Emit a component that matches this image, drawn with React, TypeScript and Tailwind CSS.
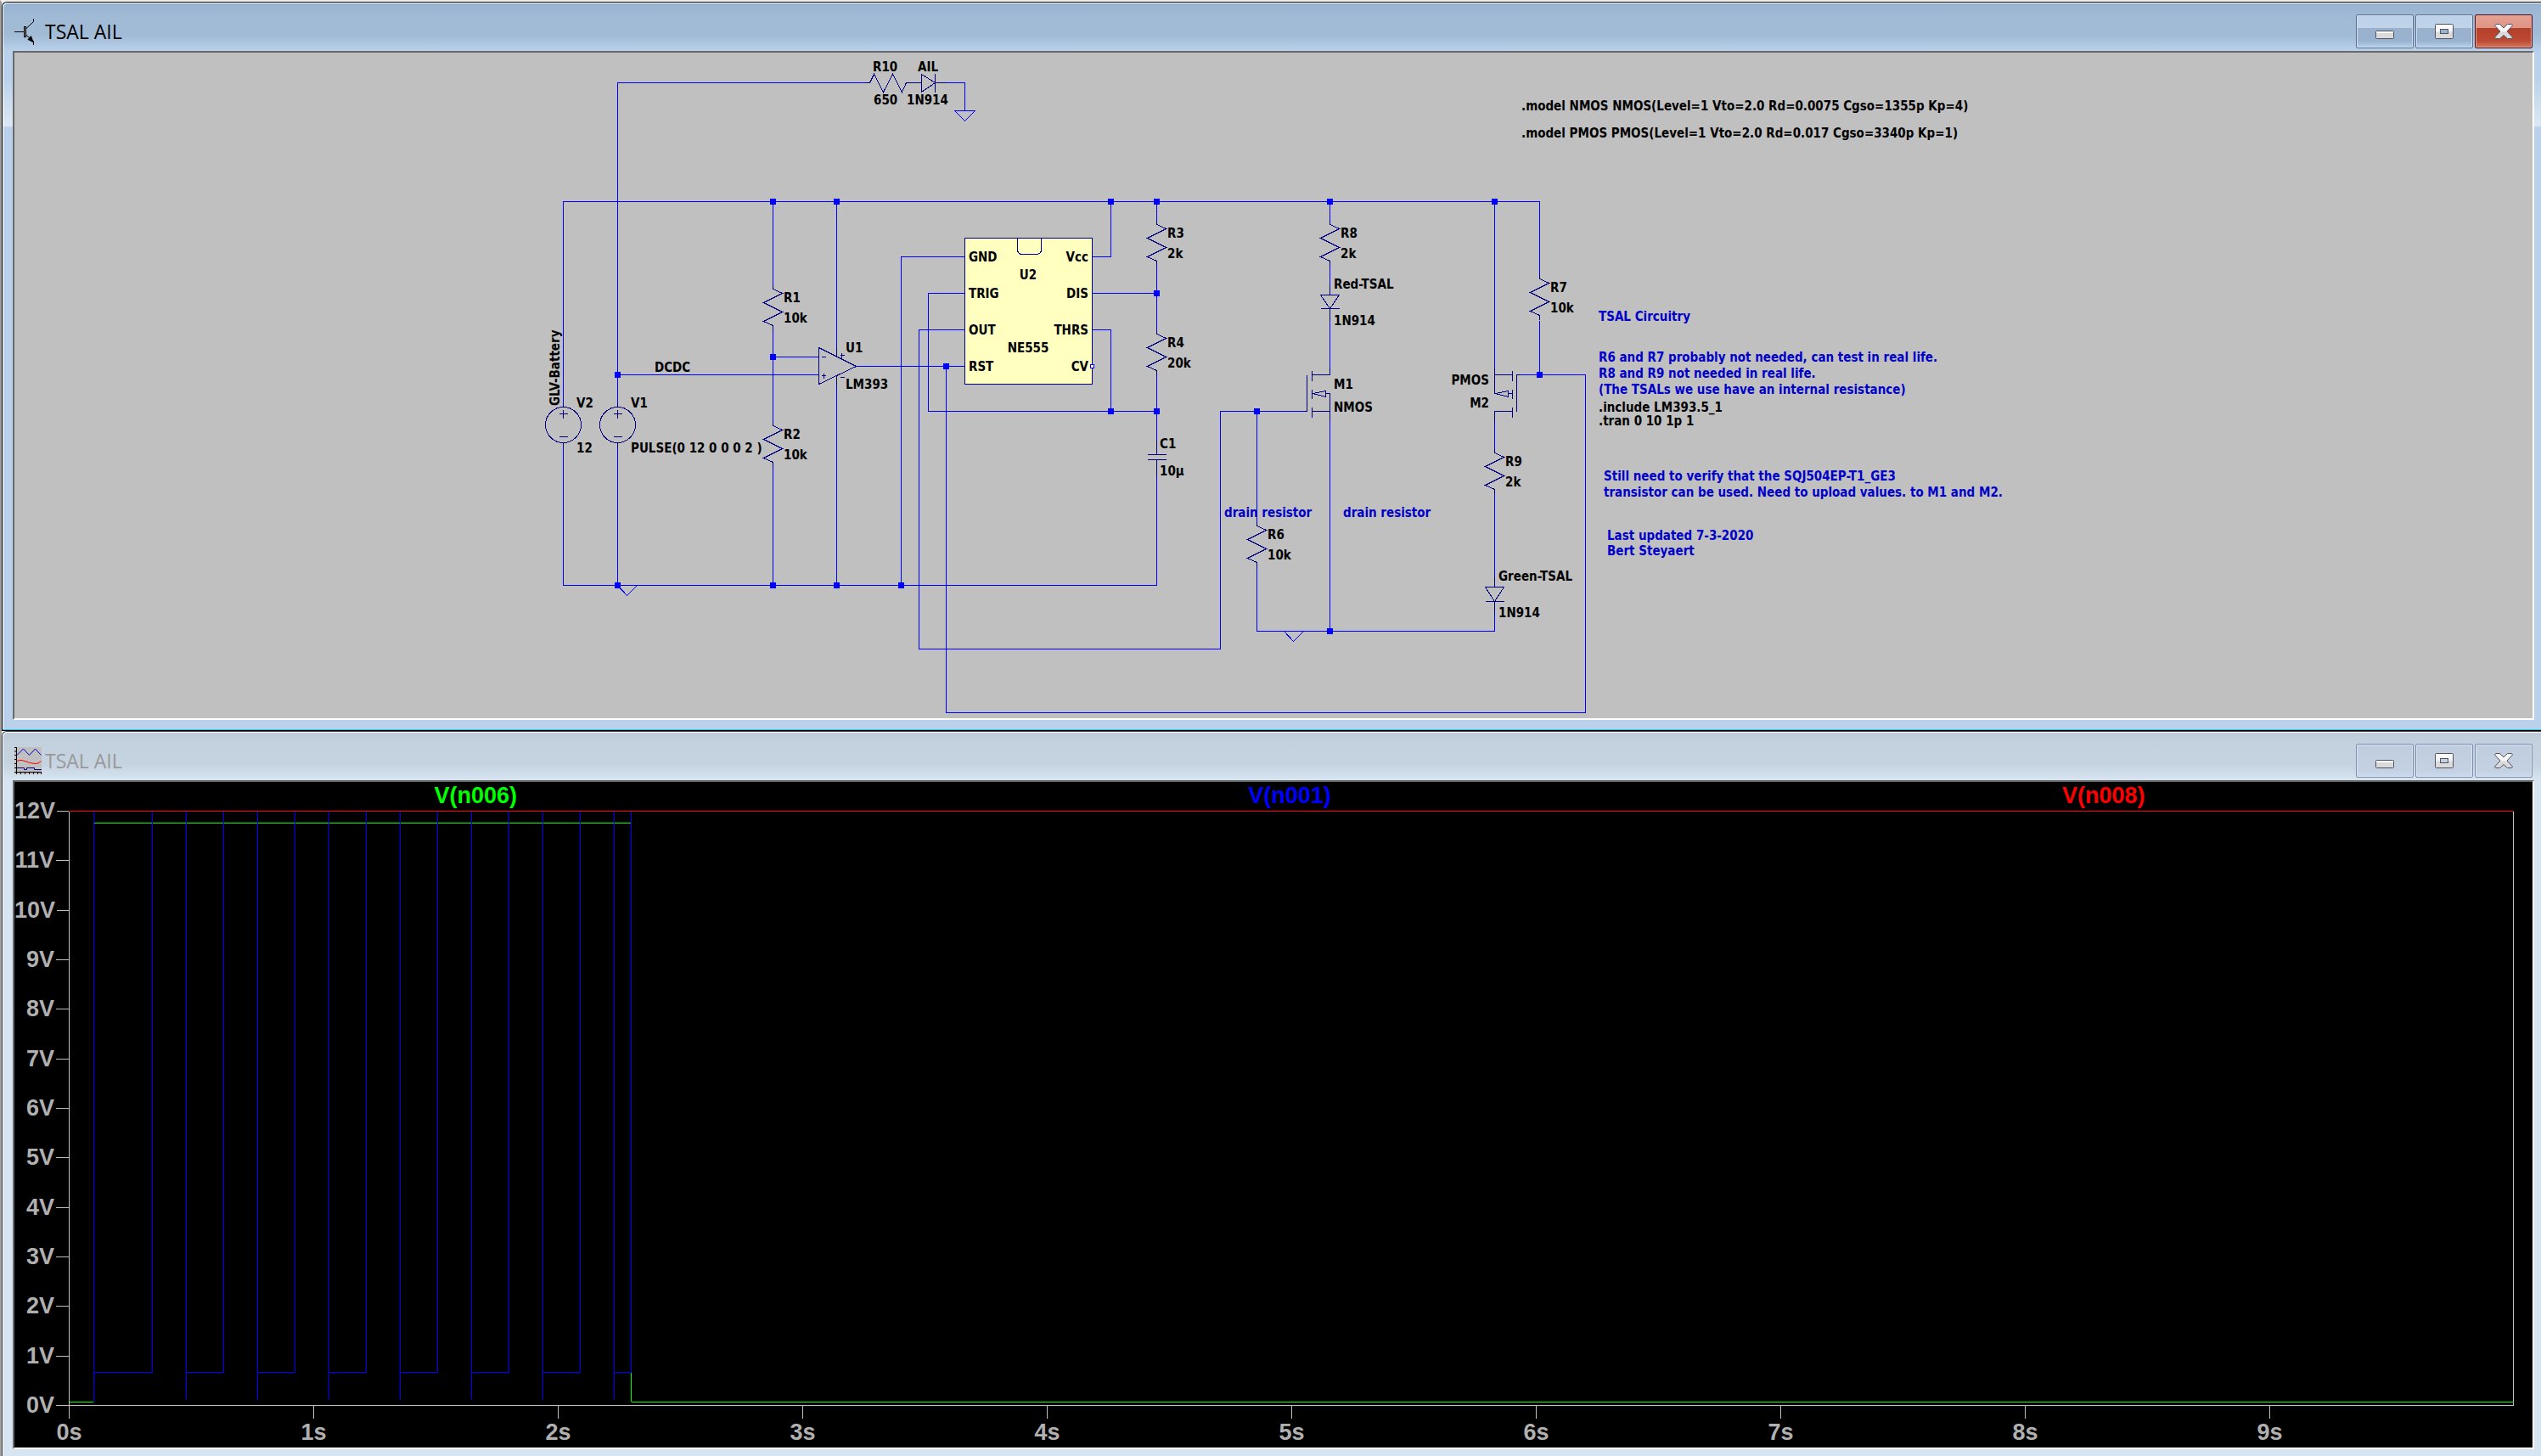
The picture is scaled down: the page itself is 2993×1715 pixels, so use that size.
import type { ReactNode } from "react";

type Pt = [number, number];

/* ---------- window chrome ---------- */

function ControlButton({ label, tone, children }: { label: string; tone: "active" | "inactive" | "close"; children: ReactNode }) {
  const tones = {
    active:
      "border-[#5b6f8c] bg-[linear-gradient(to_bottom,#bdd2e8_0%,#bfd4e9_39%,#9ab1cd_40%,#98b2cf_80%,#b9d3ee_100%)] shadow-[inset_0_0_0_1px_#cfe0f3]",
    inactive:
      "border-[#7f8fab] bg-[linear-gradient(to_bottom,#c0cddf_0%,#c3d1e3_80%,#cbdaec_100%)] shadow-[inset_0_0_0_1px_#d6e3f2]",
    close:
      "border-[#4a0a1a] bg-[linear-gradient(to_bottom,#e6a193_0%,#dd9485_39%,#b5402a_40%,#bd4a34_80%,#d57a62_100%)] shadow-[inset_0_0_0_1px_#eba597]",
  };
  return (
    <button type="button" aria-label={label} className={`flex h-10 w-[68px] items-center justify-center rounded-xs border ${tones[tone]}`}>
      <svg width="24" height="20" viewBox="-1 -1 24 20" fill="none" aria-hidden="true">
        <defs>
          <linearGradient id="glyph" x1="0" y1="0" x2="0" y2="18" gradientUnits="userSpaceOnUse">
            <stop offset="0" stopColor="#ffffff" />
            <stop offset="0.5" stopColor="#f4f4f4" />
            <stop offset="0.55" stopColor="#dadada" />
            <stop offset="1" stopColor="#dcdcdc" />
          </linearGradient>
        </defs>
        {children}
      </svg>
    </button>
  );
}

function Controls({ active }: { active: boolean }) {
  const tone = active ? "active" : "inactive";
  return (
    <div className="flex gap-0.5 pr-0.5">
      <ControlButton label="Minimize" tone={tone}>
        <rect x="0.5" y="8.5" width="21" height="9" rx="1" fill="#dadada" stroke="#4f5364" />
        <rect x="1" y="9" width="20" height="2" fill="#fff" />
      </ControlButton>
      <ControlButton label="Maximize" tone={tone}>
        <rect x="0.5" y="0.5" width="21" height="17" rx="1" fill="url(#glyph)" stroke="#4f5364" />
        <rect x="6.5" y="6.5" width="9" height="5" fill={active ? "#9ab3cf" : "#c3d1e3"} stroke="#4f5364" />
      </ControlButton>
      <ControlButton label="Close" tone={active ? "close" : "inactive"}>
        <path
          d="M1.5 0.5H6.5L11 5L15.5 0.5H20.5L21.5 2L15 9L21.5 16L20.5 17.5H15.5L11 13.5L6.5 17.5H1.5L0.5 16L7 9L0.5 2Z"
          fill="url(#glyph)"
          stroke="#4f5364"
        />
      </ControlButton>
    </div>
  );
}

function TitleBar({ icon, active }: { icon: ReactNode; active: boolean }) {
  return (
    <header className="flex h-14 items-start justify-between pt-[13px]">
      <div className="flex h-10 items-center gap-1 pl-0.5">
        {icon}
        <h1 className={`font-['Open_Sans','Segoe_UI',sans-serif] text-[23px] leading-8 ${active ? "text-black" : "text-[#999999]"}`}>
          TSAL AIL
        </h1>
      </div>
      <Controls active={active} />
    </header>
  );
}

function TransistorIcon() {
  return (
    <svg width="32" height="32" viewBox="0 0 32 32" fill="none" stroke="#000" aria-hidden="true">
      <path d="M0 16.5H11M14 12.5L22.5 4.5V1M14 20.5L22.5 27.5V32" />
      <rect x="11.5" y="10.5" width="2" height="12" fill="#888" />
      <path d="M22 28.5L16 25.5L19.5 21.5Z" fill="#000" />
    </svg>
  );
}

function WaveformIcon() {
  return (
    <svg width="32" height="32" viewBox="0 0 32 32" fill="none" aria-hidden="true">
      <rect width="32" height="32" fill="#c0c0c0" />
      <path d="M0 0.5H2M0 5H2M0 9.5H2M0 14.5H2M0 19.5H2M0 24.5H2M2.5 0V32M0 29.5H32M7.5 29V32M12.5 29V32M17.5 29V32M22.5 29V32M27.5 29V32M31.5 29V32" stroke="#000" />
      <path d="M3 9.5L10.5 2L17.5 9.5L24.5 2L31.5 9.5" stroke="#0000c8" />
      <path d="M3 16.5L6 15.5H9L14 17L18 18.5L24 19.5L28 19L31.5 16.5" stroke="#ff0000" />
      <path d="M3 24.5H11.5V26.5H14.5V24.5H23.5V26.5H32" stroke="#000080" />
    </svg>
  );
}

/* ---------- schematic ---------- */

const path = (pts: Pt[]) => pts.map(([x, y], i) => `${i ? "L" : "M"}${x} ${y}`).join("");

const wires: Pt[][] = [
  [[663, 474], [663, 237], [1813, 237], [1813, 323]],
  [[727, 474], [727, 97], [1018, 97]],
  [[1113, 97], [1136, 97], [1136, 130]],
  [[663, 526], [663, 689], [1362, 689], [1362, 560]],
  [[727, 526], [727, 689]],
  [[910, 237], [910, 335]],
  [[910, 388], [910, 496]],
  [[910, 549], [910, 689]],
  [[910, 420], [964, 420]],
  [[727, 441], [964, 441]],
  [[985, 237], [985, 409]],
  [[985, 453], [985, 689]],
  [[1008, 431], [1136, 431]],
  [[1136, 302], [1061, 302], [1061, 689]],
  [[1136, 345], [1093, 345], [1093, 484], [1362, 484]],
  [[1136, 388], [1082, 388], [1082, 764], [1437, 764], [1437, 484], [1535, 484]],
  [[1114, 431], [1114, 839], [1867, 839], [1867, 441], [1791, 441]],
  [[1286, 302], [1308, 302], [1308, 237]],
  [[1286, 345], [1362, 345]],
  [[1286, 388], [1308, 388], [1308, 484]],
  [[1362, 237], [1362, 259]],
  [[1362, 312], [1362, 388]],
  [[1362, 441], [1362, 517]],
  [[1566, 237], [1566, 259]],
  [[1566, 312], [1566, 335]],
  [[1566, 377], [1566, 432]],
  [[1566, 495], [1566, 743]],
  [[1480, 484], [1480, 614]],
  [[1480, 667], [1480, 743], [1760, 743], [1760, 721]],
  [[1760, 237], [1760, 432]],
  [[1760, 495], [1760, 528]],
  [[1760, 581], [1760, 679]],
  [[1813, 377], [1813, 441]],
];

const junctions: Pt[] = [
  [910, 237], [985, 237], [1308, 237], [1362, 237], [1566, 237], [1760, 237],
  [910, 420], [727, 441], [1114, 431], [1362, 345], [1308, 484], [1362, 484],
  [1480, 484], [1813, 441], [727, 689], [910, 689], [985, 689], [1061, 689], [1566, 743],
];

const resistors: { at: Pt; name: string; value: string }[] = [
  { at: [910, 340], name: "R1", value: "10k" },
  { at: [910, 501], name: "R2", value: "10k" },
  { at: [1362, 264], name: "R3", value: "2k" },
  { at: [1362, 393], name: "R4", value: "20k" },
  { at: [1480, 619], name: "R6", value: "10k" },
  { at: [1813, 328], name: "R7", value: "10k" },
  { at: [1566, 264], name: "R8", value: "2k" },
  { at: [1760, 533], name: "R9", value: "2k" },
];

type Label = { x: number; y: number; text: string; anchor?: "start" | "middle" | "end" };

const labels: Label[] = [
  { x: 1028, y: 84, text: "R10" },
  { x: 1081, y: 84, text: "AIL" },
  { x: 1029, y: 123, text: "650" },
  { x: 1068, y: 123, text: "1N914" },
  { x: 996, y: 415, text: "U1" },
  { x: 996, y: 458, text: "LM393" },
  { x: 771, y: 438, text: "DCDC" },
  { x: 1141, y: 308, text: "GND" },
  { x: 1141, y: 351, text: "TRIG" },
  { x: 1141, y: 394, text: "OUT" },
  { x: 1141, y: 437, text: "RST" },
  { x: 1282, y: 308, text: "Vcc", anchor: "end" },
  { x: 1282, y: 351, text: "DIS", anchor: "end" },
  { x: 1282, y: 394, text: "THRS", anchor: "end" },
  { x: 1282, y: 437, text: "CV", anchor: "end" },
  { x: 1211, y: 329, text: "U2", anchor: "middle" },
  { x: 1211, y: 415, text: "NE555", anchor: "middle" },
  { x: 1366, y: 528, text: "C1" },
  { x: 1366, y: 560, text: "10µ" },
  { x: 679, y: 480, text: "V2" },
  { x: 679, y: 533, text: "12" },
  { x: 743, y: 480, text: "V1" },
  { x: 743, y: 533, text: "PULSE(0 12 0 0 0 2 )" },
  { x: 1571, y: 340, text: "Red-TSAL" },
  { x: 1571, y: 383, text: "1N914" },
  { x: 1571, y: 458, text: "M1" },
  { x: 1571, y: 485, text: "NMOS" },
  { x: 1754, y: 453, text: "PMOS", anchor: "end" },
  { x: 1754, y: 480, text: "M2", anchor: "end" },
  { x: 1765, y: 684, text: "Green-TSAL" },
  { x: 1765, y: 727, text: "1N914" },
  { x: 1792, y: 130, text: ".model NMOS NMOS(Level=1 Vto=2.0 Rd=0.0075 Cgso=1355p Kp=4)" },
  { x: 1792, y: 162, text: ".model PMOS PMOS(Level=1 Vto=2.0 Rd=0.017 Cgso=3340p Kp=1)" },
  { x: 1883, y: 485, text: ".include LM393.5_1" },
  { x: 1883, y: 501, text: ".tran 0 10 1p 1" },
];

const comments: Label[] = [
  { x: 1883, y: 378, text: "TSAL Circuitry" },
  { x: 1883, y: 426, text: "R6 and R7 probably not needed, can test in real life." },
  { x: 1883, y: 445, text: "R8 and R9 not needed in real life." },
  { x: 1883, y: 464, text: "(The TSALs we use have an internal resistance)" },
  { x: 1889, y: 566, text: "Still need to verify that the SQJ504EP-T1_GE3" },
  { x: 1889, y: 585, text: "transistor can be used. Need to upload values. to M1 and M2." },
  { x: 1893, y: 636, text: "Last updated 7-3-2020" },
  { x: 1893, y: 654, text: "Bert Steyaert" },
  { x: 1442, y: 609, text: "drain resistor" },
  { x: 1582, y: 609, text: "drain resistor" },
];

const symbols = [
  // R10 and the AIL diode
  "M1018 97H1024L1029 87L1040 108L1051 87L1062 108L1067 97H1085M1085 87V108M1085 87L1101 97L1085 108M1101 86V108M1101 97H1113",
  // comparator
  "M964 409V452L1008 431ZM985 409V419M985 442V453M967 420H972M967 442H972M970 439V445M989 418H994M991 415V421M989 444H994",
  // capacitor
  "M1351 535H1373M1351 541H1373M1362 517V535M1362 541V560",
  // voltage sources
  "M663 474V479M663 521V526M658 487H668M663 482V492M658 514H668M727 474V479M727 521V526M722 487H732M727 482V492M722 514H732",
  // Red-TSAL diode
  "M1566 335V347M1555 347H1577L1566 363ZM1555 363H1577M1566 363V377",
  // Green-TSAL diode
  "M1760 679V691M1749 691H1771L1760 708ZM1749 708H1771M1760 708V721",
  // M1
  "M1535 484H1539V441M1545 436V448M1545 458V469M1545 479V491M1545 441H1566V432M1546 463L1561 460V467ZM1561 463H1566V495M1545 484H1566",
  // M2
  "M1791 441H1786V484M1781 436V448M1781 458V469M1781 479V491M1760 441H1781M1760 432V463M1761 463L1776 460V467ZM1776 463H1781M1781 484H1760V495",
];

function Schematic() {
  return (
    <svg viewBox="17 62 2966 784" className="block h-auto w-full" role="img" aria-label="TSAL AIL schematic">
      <g transform="translate(0.5 0.5)" fill="none" stroke="#0000ff" shapeRendering="crispEdges">
        <rect x="1136" y="280" width="150" height="172" fill="#ffffc0" stroke="#000080" />
        {wires.map((w, i) => (
          <path key={i} d={path(w)} />
        ))}
        <path d="M1124 130H1148L1136 142Z" />
        <path d="M727 689L738 701L750 689" />
        <path d="M1512 743L1523 755L1535 743" />
        <g stroke="#000080">
          <path d="M1198 280V293Q1198 299 1204 299H1220Q1226 299 1226 293V280" />
          {symbols.map((d, i) => (
            <path key={i} d={d} />
          ))}
          <circle cx="663" cy="500" r="21" />
          <circle cx="727" cy="500" r="21" />
          {resistors.map(({ at: [x, y], name }) => (
            <path key={name} d={`M${x} ${y - 5}v5l11 5l-22 11l22 11l-22 11l11 5v5`} />
          ))}
        </g>
        {junctions.map(([x, y]) => (
          <rect key={`${x}-${y}`} x={x - 3} y={y - 3} width="6" height="6" fill="#0000ff" />
        ))}
        <rect x="1284" y="429" width="4" height="4" fill="#ffffff" />
      </g>
      <g className="font-['DejaVu_Sans_Condensed',Tahoma,sans-serif] text-[15px] font-bold" fill="#000000">
        {labels.map((l) => (
          <text key={`${l.x}-${l.y}`} x={l.x} y={l.y} textAnchor={l.anchor}>
            {l.text}
          </text>
        ))}
        {resistors.map(({ at: [x, y], name, value }) => (
          <g key={name}>
            <text x={x + 13} y={y + 16}>{name}</text>
            <text x={x + 13} y={y + 40}>{value}</text>
          </g>
        ))}
        <text transform="translate(659 478) rotate(-90)">GLV-Battery</text>
        <g fill="#0000c8">
          {comments.map((l) => (
            <text key={`${l.x}-${l.y}`} x={l.x} y={l.y}>
              {l.text}
            </text>
          ))}
        </g>
      </g>
    </svg>
  );
}

/* ---------- waveform plot ---------- */

const volts = ["12V", "11V", "10V", "9V", "8V", "7V", "6V", "5V", "4V", "3V", "2V", "1V", "0V"];
const seconds = ["0s", "1s", "2s", "3s", "4s", "5s", "6s", "7s", "8s", "9s"];
const traces = [
  { name: "V(n006)", color: "text-[#00ff00]" },
  { name: "V(n001)", color: "text-[#0000ff]" },
  { name: "V(n008)", color: "text-[#ff0000]" },
];
// start and end of each low pulse of V(n001)
const pulses: Pt[] = [
  [29, 98], [138, 182], [222, 266], [306, 350], [390, 434], [474, 518], [558, 602], [642, 662],
];

function Plot() {
  return (
    <div className="flex flex-1 flex-col bg-black font-['Liberation_Sans',Arial,sans-serif] text-[27px] font-bold text-[#b0b0b0]">
      <div className="grid h-[34px] grid-cols-3 items-start pr-[26px] pl-16 text-center leading-8">
        {traces.map((t) => (
          <span key={t.name} className={t.color}>{t.name}</span>
        ))}
      </div>
      <div className="flex flex-1 pr-[22px]">
        <ul className="flex w-16 flex-col justify-between">
          {volts.map((v) => (
            <li key={v} className="flex h-px items-center justify-end gap-0.5">
              <span className="leading-none">{v}</span>
              <span className="h-px w-[15px] bg-[#c0c0c0]" />
            </li>
          ))}
        </ul>
        <svg viewBox="0 0 2880 701" preserveAspectRatio="none" className="block min-w-0 flex-1" role="img" aria-label="Voltage waveforms">
          <g transform="translate(0.5 0.5)" fill="none" shapeRendering="crispEdges">
            <path d="M0 0V700H2879V0" stroke="#c0c0c0" />
            <path d="M0 696H28L29 695V14H662V695L663 696H2879" stroke="#00ff00" />
            <path d="M29 661V695" stroke="#0000ff" />
            {pulses.map(([a, b]) => (
              <path key={a} d={`M${a} 693V0M${a} 661H${b}V0`} stroke="#0000ff" />
            ))}
            <path d="M0 0H2879" stroke="#ff0000" />
          </g>
        </svg>
      </div>
      <ul className="grid h-[49px] grid-cols-10 pr-[22px] pl-16">
        {seconds.map((s) => (
          <li key={s} className="flex w-px flex-col items-center">
            <span className="h-[15px] w-px shrink-0 bg-[#c0c0c0]" />
            <span className="leading-8">{s}</span>
          </li>
        ))}
      </ul>
    </div>
  );
}

export default function App() {
  return (
    <main className="flex min-h-screen flex-col border-t-2 border-l-2 border-t-[#f0f0f0] border-l-[#a0a0a0] bg-[#f0f0f0]">
      <section className="rounded-tl-md border-t border-l border-black bg-[#b9d1ea]">
        <div className="rounded-tl-md border-t border-l border-white bg-[linear-gradient(to_bottom,#98b3d0_0px,#a0bad6_14px,#a2bbd6_38px,#b9d1ea_56px,#b9d1ea_86px,#dce8f4_144px,#b9d1ea_146px)] pr-2 pb-[11px] pl-[11px]">
          <TitleBar icon={<TransistorIcon />} active />
          <div className="border-2 border-t-[#696969] border-r-white border-b-white border-l-[#696969] bg-[#c0c0c0]">
            <Schematic />
          </div>
        </div>
        <div className="border-t border-b border-t-[#2cc4e0] border-b-black" />
      </section>
      <section className="flex flex-1 flex-col rounded-tl-md border-t border-l border-[#404040]">
        <div className="flex flex-1 flex-col rounded-tl-md border-t border-l border-[#f4f7fa] bg-[linear-gradient(to_bottom,#becbd9_0px,#c4d1de_14px,#c6d3e1_38px,#d7e4f2_56px)] pr-2 pb-2 pl-[11px]">
          <TitleBar icon={<WaveformIcon />} active={false} />
          <div className="flex flex-1 flex-col border-2 border-t-[#696969] border-r-white border-b-white border-l-[#696969]">
            <Plot />
          </div>
        </div>
      </section>
    </main>
  );
}
